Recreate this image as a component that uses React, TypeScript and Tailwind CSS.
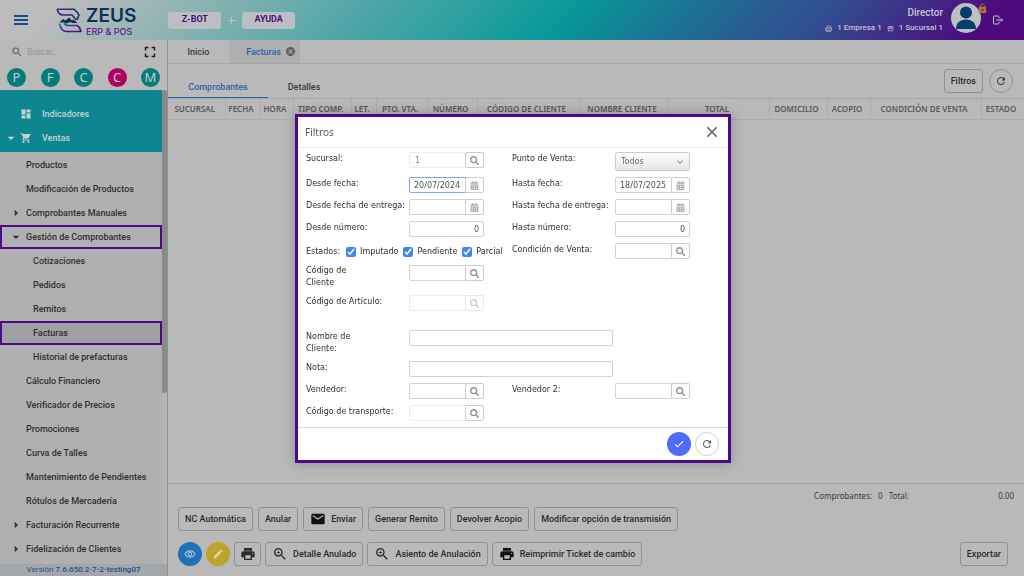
import React from 'react';
import {
  MdAdd,
  MdArrowDropDown,
  MdArrowRight,
  MdCancel,
  MdCheck,
  MdClose,
  MdCreate,
  MdDashboard,
  MdEmail,
  MdFullscreen,
  MdKeyboardArrowDown,
  MdLock,
  MdOutlineRemoveRedEye,
  MdOutlineStorefront,
  MdPrint,
  MdRefresh,
  MdSearch,
  MdShoppingCart,
  MdZoomIn,
} from 'react-icons/md';
import { FaCalendarAlt, FaSearch } from 'react-icons/fa';
import { TbLogout } from 'react-icons/tb';
import { Building2 } from 'lucide-react';

interface MenuItem {
  label: string;
  nested?: boolean;
  arrow?: 'right' | 'down';
  marked?: boolean;
  current?: boolean;
}

const menuItems: MenuItem[] = [
  { label: 'Productos' },
  { label: 'Modificación de Productos' },
  { label: 'Comprobantes Manuales', arrow: 'right' },
  { label: 'Gestión de Comprobantes', arrow: 'down', marked: true },
  { label: 'Cotizaciones', nested: true },
  { label: 'Pedidos', nested: true },
  { label: 'Remitos', nested: true },
  { label: 'Facturas', nested: true, marked: true, current: true },
  { label: 'Historial de prefacturas', nested: true },
  { label: 'Cálculo Financiero' },
  { label: 'Verificador de Precios' },
  { label: 'Promociones' },
  { label: 'Curva de Talles' },
  { label: 'Mantenimiento de Pendientes' },
  { label: 'Rótulos de Mercadería' },
  { label: 'Facturación Recurrente', arrow: 'right' },
  { label: 'Fidelización de Clientes', arrow: 'right' },
];

const shortcuts = [
  { letter: 'P', color: 'bg-[#047d78]' },
  { letter: 'F', color: 'bg-[#047d78]' },
  { letter: 'C', color: 'bg-[#047d78]' },
  { letter: 'C', color: 'bg-[#b0005f]' },
  { letter: 'M', color: 'bg-[#047d78]' },
];

const columns = [
  { title: 'SUCURSAL', width: 'w-[57px]' },
  { title: 'FECHA', width: 'w-[35px]' },
  { title: 'HORA', width: 'w-[33px]' },
  { title: 'TIPO COMP.', width: 'w-[58px]' },
  { title: 'LET.', width: 'w-[25px]' },
  { title: 'PTO. VTA.', width: 'w-[51px]' },
  { title: 'NÚMERO', width: 'w-[50px]' },
  { title: 'CÓDIGO DE CLIENTE', width: 'w-[102px]' },
  { title: 'NOMBRE CLIENTE', width: 'w-[89px]' },
  { title: 'TOTAL', width: 'w-[101px]' },
  { title: 'DOMICILIO', width: 'w-[58px]' },
  { title: 'ACOPIO', width: 'w-[43px]' },
  { title: 'CONDICIÓN DE VENTA', width: 'w-[111px]' },
  { title: 'ESTADO', width: 'w-[43px]' },
];

const Logo: React.FC = () => (
  <div className="flex items-center gap-1">
    <svg viewBox="0 0 26 25" className="h-[25px] w-[26px]" fill="none" strokeWidth="1.6" strokeLinejoin="round">
      <defs>
        <linearGradient id="logoTop" x1="0" y1="0" x2="1" y2="0">
          <stop offset="0" stopColor="#5b1a96" />
          <stop offset="1" stopColor="#12305c" />
        </linearGradient>
        <linearGradient id="logoBottom" x1="0" y1="0" x2="1" y2="1">
          <stop offset="0" stopColor="#0a7f88" />
          <stop offset="0.5" stopColor="#5b1a96" />
          <stop offset="1" stopColor="#4b0f82" />
        </linearGradient>
      </defs>
      <path d="M1 1.300h17c2 1.500 4 3.500 5 5.700l-2 5" stroke="url(#logoTop)" />
      <path d="M1 1.300c1 3.700 3 5.700 6 5.700h9l4.500 5" stroke="url(#logoTop)" />
      <path d="M3.500 14.500l3.500-3.500 2.500 1.500 3.500-3 3 3 1.500-1 4 3.500h-5l-2-1-4 1.500-2.500-1z" fill="#0f2f57" />
      <path d="M3.500 15.500c1 5 3 8 7 8h14.500c-.5-3-2-5-4-6H11l-3-2" stroke="url(#logoBottom)" />
    </svg>
    <div className="font-['Inter',sans-serif]">
      <p className="text-[19px] leading-[23px] font-semibold text-[#0f2f57]">ZEUS</p>
      <p className="text-[9px] leading-[9px] font-medium text-[#5b1a96]">ERP &amp; POS</p>
    </div>
  </div>
);

const Header: React.FC = () => (
  <header className="flex h-10 shrink-0 items-center bg-[linear-gradient(135deg,#bcbcbc_6%,#069898_55%,#1c7193_66%,#334a8e_80%,#4c0a7c_95%)] pl-[14px] pr-5">
    <button aria-label="Menú" className="flex w-[14px] flex-col gap-[2px]">
      <span className="h-[2px] w-full bg-[#174a86]"></span>
      <span className="h-[2px] w-full bg-[#174a86]"></span>
      <span className="h-[2px] w-full bg-[#174a86]"></span>
    </button>
    <div className="ml-7">
      <Logo />
    </div>
    <div className="ml-8 flex items-center gap-1 text-[9px] font-bold text-[#4b0f82]">
      <button className="h-[17px] w-[53px] rounded-[3px] bg-[#bcbfc1]">Z-BOT</button>
      <MdAdd className="size-[13px] text-[#bcc4c6]" />
      <button className="h-[17px] w-[53px] rounded-[3px] bg-[#bcbfc1]">AYUDA</button>
    </div>
    <div className="ml-auto text-right font-medium text-[#c4c4d0]">
      <p className="text-[10px] leading-4">Director</p>
      <p className="flex items-center justify-end gap-[5px] text-[8px] leading-[14px]">
        <Building2 className="size-[7px]" />
        <span>1 Empresa 1</span>
        <MdOutlineStorefront className="size-[7px]" />
        <span>1 Sucursal 1</span>
      </p>
    </div>
    <div className="relative mb-1 ml-2">
      <svg viewBox="0 0 30 30" className="size-[30px]">
        <circle cx="15" cy="15" r="15" fill="#bfbfc3" />
        <circle cx="15" cy="9.500" r="6" fill="#063c70" />
        <path d="M5 26c0-6 4-9.500 10-9.500s10 3.500 10 9.500z" fill="#063c70" />
      </svg>
      <MdLock className="absolute -right-[7px] top-0 size-[11px] text-[#b9722c]" />
    </div>
    <button aria-label="Salir" className="ml-[11px]">
      <TbLogout className="size-3 text-[#bfbfc8]" />
    </button>
  </header>
);

const Sidebar: React.FC = () => (
  <aside className="flex w-[168px] shrink-0 flex-col border-r border-[#8f9191] bg-[#b0b0b0] text-[9px] leading-4 font-medium text-[#2f3133]">
    <div className="flex h-6 shrink-0 items-center bg-[#b9b9b9] pl-[11px] pr-2">
      <MdSearch className="size-3 shrink-0 text-[#5c5c5c]" />
      <input
        aria-label="Buscar"
        placeholder="Buscar..."
        className="ml-1 min-w-0 flex-1 bg-transparent font-['Noto_Sans',sans-serif] text-[8px] font-normal outline-none placeholder:text-[#929292]"
      />
      <button aria-label="Pantalla completa">
        <MdFullscreen className="size-[18px] text-[#222]" />
      </button>
    </div>
    <div className="flex h-[26px] shrink-0 items-center justify-between bg-[#b9b9b9] px-[7px]">
      {shortcuts.map((s, idx) => (
        <button
          key={idx}
          className={`flex size-[19px] items-center justify-center rounded-full font-['Noto_Sans',sans-serif] text-[13px] leading-none font-normal text-[#c3cccc] ${s.color}`}
        >
          {s.letter}
        </button>
      ))}
    </div>

    <div className="flex min-h-0 flex-1">
      <nav className="min-w-0 flex-1 overflow-hidden">
        <div className="mb-px bg-[#0d8690] pb-[2px] pt-3 text-[#c5d2d3]">
          <a href="#indicadores" className="flex h-6 items-center pl-5">
            <MdDashboard className="size-3" />
            <span className="ml-[10px]">Indicadores</span>
          </a>
          <a href="#ventas" className="flex h-6 items-center pl-[3px]">
            <MdArrowDropDown className="size-4" />
            <MdShoppingCart className="ml-px size-3" />
            <span className="ml-[10px]">Ventas</span>
          </a>
        </div>
        <ul>
          {menuItems.map(item => (
            <li key={item.label}>
              <a
                href="#menu"
                className={`flex h-6 items-center whitespace-nowrap border-2 ${item.marked ? 'border-[#4b0a8c]' : 'border-transparent'} ${item.current ? 'bg-[#9fa1a1]' : ''} ${item.nested ? 'pl-[31px]' : 'pl-[6px]'}`}
              >
                {!item.nested && (
                  <span className="w-[18px] shrink-0">
                    {item.arrow === 'right' && <MdArrowRight className="size-4" />}
                    {item.arrow === 'down' && <MdArrowDropDown className="size-4" />}
                  </span>
                )}
                {item.label}
              </a>
            </li>
          ))}
        </ul>
      </nav>
      <div className="w-[5px] bg-[#b5b5b5]">
        <div className="h-[64%] rounded-full bg-[#868b8a]"></div>
      </div>
    </div>
    <p className="h-3 shrink-0 bg-[#a3a6aa] text-center text-[8px] leading-3 text-[#28508a]">
      <span className="font-normal">Versión</span> 7.6.650.2-7-2-testing07
    </p>
  </aside>
);

const OutlineButton: React.FC<{ icon?: React.ReactNode; children?: React.ReactNode }> = ({ icon, children }) => (
  <button className="flex h-6 items-center gap-[5px] whitespace-nowrap rounded-[3px] border border-[#929292] px-[6px] text-[9px] leading-4 font-medium text-[#2b2b2b]">
    {icon}
    {children}
  </button>
);

const InvoiceList: React.FC = () => (
  <main className="flex min-w-0 flex-1 flex-col bg-[#b9b9b9] text-[9px] leading-4 font-medium text-[#3b3b3b]">
    <div className="flex h-6 shrink-0 border-b border-[#a6a6a6]">
      <button className="w-[61px]">Inicio</button>
      <button className="flex w-[71px] items-center justify-end gap-1 bg-[#adafb0] pr-1 text-[#2f62b0]">
        Facturas
        <MdCancel className="size-[11px] text-[#636363]" />
      </button>
    </div>

    <div className="flex h-[35px] shrink-0 items-stretch border-b border-[#a6a6a6] pr-[11px]">
      <button className="w-[100px] border-b border-[#2f62b0] pt-3 text-[#2f62b0]">Comprobantes</button>
      <button className="w-[72px] pt-3">Detalles</button>
      <div className="ml-auto flex items-center gap-[6px]">
        <OutlineButton>Filtros</OutlineButton>
        <button aria-label="Actualizar" className="flex size-6 items-center justify-center rounded-full border border-[#929292]">
          <MdRefresh className="size-3" />
        </button>
      </div>
    </div>

    <div className="min-h-0 flex-1 overflow-hidden">
      <table className="w-full table-fixed">
        <thead>
          <tr className="h-5 border-b border-[#adadad]">
            {columns.map(c => (
              <th
                key={c.title}
                className={`${c.width} whitespace-nowrap border-r border-[#adadad] py-0 pl-0 pr-[3px] text-center font-['Noto_Sans',sans-serif] text-[8px] font-semibold text-[#575859]`}
              >
                {c.title}
              </th>
            ))}
          </tr>
        </thead>
        <tbody></tbody>
      </table>
    </div>

    <footer className="shrink-0 border-t border-[#a0a0a0] pb-[10px] pl-[10px]">
      <div className="flex h-[23px] items-center justify-end pr-[10px] font-['Noto_Sans',sans-serif] text-[8px] font-normal">
        <span>Comprobantes:</span>
        <span className="ml-[6px]">0</span>
        <span className="ml-[6px]">Total:</span>
        <span className="w-[105px] text-right">0.00</span>
      </div>
      <div className="flex gap-[5px]">
        <OutlineButton>NC Automática</OutlineButton>
        <OutlineButton>Anular</OutlineButton>
        <OutlineButton icon={<MdEmail className="size-4 text-[#111]" />}>Enviar</OutlineButton>
        <OutlineButton>Generar Remito</OutlineButton>
        <OutlineButton>Devolver Acopio</OutlineButton>
        <OutlineButton>Modificar opción de transmisión</OutlineButton>
      </div>
      <div className="mt-[11px] flex gap-1 pr-4">
        <button aria-label="Ver" className="flex size-6 items-center justify-center rounded-full bg-[#1f74b8] text-[#b5cbe0]">
          <MdOutlineRemoveRedEye className="size-3" />
        </button>
        <button aria-label="Editar" className="flex size-6 items-center justify-center rounded-full bg-[#bda42b] text-[#dcd5b5]">
          <MdCreate className="size-3" />
        </button>
        <button aria-label="Imprimir" className="flex h-6 w-[27px] items-center justify-center rounded-[3px] border border-[#929292] text-[#2b2b2b]">
          <MdPrint className="size-4" />
        </button>
        <OutlineButton icon={<MdZoomIn className="size-4" />}>Detalle Anulado</OutlineButton>
        <OutlineButton icon={<MdZoomIn className="size-4" />}>Asiento de Anulación</OutlineButton>
        <OutlineButton icon={<MdPrint className="size-4 text-[#111]" />}>Reimprimir Ticket de cambio</OutlineButton>
        <div className="ml-auto">
          <OutlineButton>Exportar</OutlineButton>
        </div>
      </div>
    </footer>
  </main>
);

interface LookupFieldProps {
  id: string;
  value?: string;
  kind?: 'search' | 'date';
  disabled?: boolean;
  muted?: boolean;
  focused?: boolean;
}

// Text box with a search or calendar button stuck to its right side
const LookupField: React.FC<LookupFieldProps> = ({ id, value = '', kind = 'search', disabled, muted, focused }) => (
  <div className="flex h-4 w-[75px]">
    <input
      id={id}
      defaultValue={value}
      disabled={disabled}
      className={`h-full w-[57px] rounded-l-[2px] border bg-white text-[8px] outline-none ${focused ? 'border-[#7fa8f0]' : disabled ? 'border-[#ececec]' : 'border-[#cfd3d6]'} ${disabled ? 'px-[5px] text-[#8a8a8a]' : 'pl-1 text-[#4a5258]'}`}
    />
    <button
      type="button"
      disabled={muted}
      aria-label={kind === 'date' ? 'Abrir calendario' : 'Buscar'}
      className={`-ml-px flex w-[19px] items-center justify-center rounded-[2px] border ${muted ? 'border-[#e8e8e8] text-[#cfcfcf]' : 'border-[#c9cdcf] text-[#8b9194]'}`}
    >
      {kind === 'date' ? <FaCalendarAlt className="size-[9px] text-[#a8acae]" /> : <FaSearch className="size-[9px]" />}
    </button>
  </div>
);

const Label: React.FC<{ htmlFor: string; children: React.ReactNode }> = ({ htmlFor, children }) => (
  <label htmlFor={htmlFor} className="whitespace-nowrap pt-px">
    {children}
  </label>
);

const numberInput = 'h-4 w-[75px] rounded-[2px] border border-[#cfd3d6] px-1 text-right text-[#4a5258]';
const wideInput = 'h-4 w-[204px] rounded-[2px] border border-[#cfd3d6] px-1';
const row = 'grid h-[22px] grid-cols-[103px_103px_103px_1fr]';

const FilterDialog: React.FC = () => (
  <div className="fixed inset-0 flex items-center justify-center pl-[2px] pt-px">
    <form
      role="dialog"
      aria-label="Filtros"
      className="w-[436px] border-[3px] border-[#4b0a8c] bg-white font-['DejaVu_Sans',sans-serif] text-[8px] leading-3 text-[#2c2f31] shadow-[0_0_12px_rgba(0,0,0,0.25)]"
    >
      <div className="flex h-[31px] items-center justify-between border-b border-[#ececec] px-[7px]">
        <h2 className="font-['Noto_Sans',sans-serif] text-[10px] text-[#55595c]">Filtros</h2>
        <button type="button" aria-label="Cerrar">
          <MdClose className="size-[18px] text-[#5c6164]" />
        </button>
      </div>

      <div className="pl-2 pt-1">
        <div className="grid h-[25px] grid-cols-[103px_103px_103px_1fr]">
          <Label htmlFor="sucursal">Sucursal:</Label>
          <LookupField id="sucursal" value="1" disabled />
          <Label htmlFor="punto">Punto de Venta:</Label>
          <div className="relative h-[19px] w-[75px]">
            <select
              id="punto"
              className="size-full appearance-none rounded-[2px] border border-[#c9cdcf] bg-linear-to-b from-white to-[#e6e6e6] px-[5px] text-[#6b7073]"
            >
              <option>Todos</option>
            </select>
            <MdKeyboardArrowDown className="pointer-events-none absolute right-1 top-1 size-3 text-[#8b9194]" />
          </div>
        </div>
        <div className={row}>
          <Label htmlFor="desde-fecha">Desde fecha:</Label>
          <LookupField id="desde-fecha" value="20/07/2024" kind="date" focused />
          <Label htmlFor="hasta-fecha">Hasta fecha:</Label>
          <LookupField id="hasta-fecha" value="18/07/2025" kind="date" />
        </div>
        <div className={row}>
          <Label htmlFor="desde-entrega">Desde fecha de entrega:</Label>
          <LookupField id="desde-entrega" kind="date" />
          <Label htmlFor="hasta-entrega">Hasta fecha de entrega:</Label>
          <LookupField id="hasta-entrega" kind="date" />
        </div>
        <div className={row}>
          <Label htmlFor="desde-numero">Desde número:</Label>
          <input id="desde-numero" defaultValue="0" className={numberInput} />
          <Label htmlFor="hasta-numero">Hasta número:</Label>
          <input id="hasta-numero" defaultValue="0" className={numberInput} />
        </div>
        <div className={row}>
          <div className="col-span-2 flex h-[17px] items-center">
            <span className="mr-[6px]">Estados:</span>
            {['Imputado', 'Pendiente', 'Parcial'].map(estado => (
              <label key={estado} className="mr-[5px] flex items-center gap-1">
                <input type="checkbox" defaultChecked className="size-[10px] accent-[#3f86f4]" />
                {estado}
              </label>
            ))}
          </div>
          <Label htmlFor="condicion">Condición de Venta:</Label>
          <LookupField id="condicion" />
        </div>
        <div className="grid h-[30px] grid-cols-[103px_1fr]">
          <label htmlFor="codigo-cliente" className="w-12">Código de Cliente</label>
          <LookupField id="codigo-cliente" />
        </div>
        <div className="grid h-[35px] grid-cols-[103px_1fr]">
          <Label htmlFor="codigo-articulo">Código de Artículo:</Label>
          <LookupField id="codigo-articulo" disabled muted />
        </div>
        <div className="grid h-[31px] grid-cols-[103px_1fr]">
          <label htmlFor="nombre-cliente" className="w-12 pt-px">Nombre de Cliente:</label>
          <input id="nombre-cliente" className={wideInput} />
        </div>
        <div className="grid h-[22px] grid-cols-[103px_1fr]">
          <Label htmlFor="nota">Nota:</Label>
          <input id="nota" className={wideInput} />
        </div>
        <div className={row}>
          <Label htmlFor="vendedor">Vendedor:</Label>
          <LookupField id="vendedor" />
          <Label htmlFor="vendedor2">Vendedor 2:</Label>
          <LookupField id="vendedor2" />
        </div>
        <div className={row}>
          <Label htmlFor="transporte">Código de transporte:</Label>
          <LookupField id="transporte" disabled />
        </div>
      </div>

      <div className="flex h-[33px] items-center justify-end gap-1 border-t border-[#dcdcdc] pr-[9px]">
        <button type="submit" aria-label="Aplicar" className="flex size-6 items-center justify-center rounded-full bg-[#4f6bfb] text-white">
          <MdCheck className="size-3" />
        </button>
        <button type="reset" aria-label="Limpiar" className="flex size-6 items-center justify-center rounded-full border border-[#d2d2d2] text-[#55595c]">
          <MdRefresh className="size-3" />
        </button>
      </div>
    </form>
  </div>
);

const App: React.FC = () => (
  <div className="flex h-screen flex-col bg-[#b9b9b9] font-['Roboto',sans-serif]">
    <Header />
    <div className="flex min-h-0 flex-1">
      <Sidebar />
      <InvoiceList />
    </div>
    <FilterDialog />
  </div>
);

export default App;
